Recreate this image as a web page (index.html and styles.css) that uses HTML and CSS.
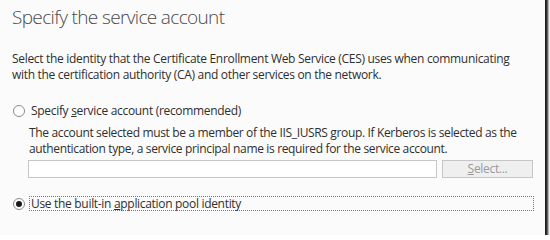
FILE: index.html
```html
<!DOCTYPE html>
<html>
<head>
<meta charset="utf-8">
<link rel="stylesheet" href="styles.css">
</head>
<body>
<div class="frame">
  <h1 class="title">Specify the service account</h1>
  <p class="intro">Select the identity that the Certificate Enrollment Web Service (CES) uses when communicating<br>with the certification authority (CA) and other services on the network.</p>
  <div class="option">
    <span class="radio"></span>
    <span class="label">Specify <u>s</u>ervice account (recommended)</span>
  </div>
  <p class="desc">The account selected must be a member of the IIS_IUSRS group. If Kerberos is selected as the<br>authentication type, a service principal name is required for the service account.</p>
  <div class="picker">
    <span class="field"></span>
    <span class="button"><u>S</u>elect...</span>
  </div>
  <div class="option option-second">
    <span class="radio radio-on"></span>
    <span class="label label-focus">Use the built-in <u>a</u>pplication pool identity</span>
  </div>
</div>
</body>
</html>
```

FILE: styles.css
```css
html, body {
  margin: 0;
  padding: 0;
  background: #ffffff;
  overflow: hidden;
}

.frame {
  box-sizing: border-box;
  width: 565px;
  height: 255px;
  margin: -20px 0 0 -20px;
  padding: 24px 0 0 32px;
  background: #fbfbfb;
  box-shadow: 3px 3px 2px #1e1e1e;
  font-family: "Open Sans", "Noto Sans", sans-serif;
  color: #2f2f2f;
  display: flex;
  flex-direction: column;
  white-space: nowrap;
}

.title {
  margin: 0;
  font-size: 19px;
  line-height: 26px;
  font-weight: 300;
  letter-spacing: -0.65px;
  color: #4a4a4a;
}

.intro,
.option,
.button {
  letter-spacing: -0.31px;
}

.desc {
  letter-spacing: -0.35px;
}

.intro {
  margin: 21px 0 0 0;
  font-size: 12px;
  line-height: 16px;
}

.option {
  display: flex;
  align-items: center;
  margin: 19px 0 0 1px;
  font-size: 12px;
  line-height: 16px;
}

.radio {
  box-sizing: border-box;
  width: 12px;
  height: 12px;
  border: 1px solid #8a8a8a;
  border-radius: 50%;
  background: #ffffff;
  margin-right: 4px;
  display: flex;
  align-items: center;
  justify-content: center;
}

.radio-on::after {
  content: "";
  width: 6px;
  height: 6px;
  border-radius: 50%;
  background: #1a1a1a;
}

.label {
  border: 1px solid transparent;
  padding: 0 1px;
}

.label u {
  text-decoration-thickness: 1px;
}

.desc {
  margin: 5px 0 0 17px;
  font-size: 12px;
  line-height: 16px;
}

.picker {
  display: flex;
  gap: 5px;
  margin: 3px 0 0 16px;
}

.field {
  box-sizing: border-box;
  width: 409px;
  height: 18px;
  border: 1px solid #c6c6c6;
  background: #ffffff;
}

.button {
  box-sizing: border-box;
  width: 91px;
  height: 18px;
  border: 1px solid #c6c6c6;
  background: #efefef;
  color: #9a9a9a;
  font-size: 12px;
  line-height: 15px;
  text-align: center;
}

.option-second {
  margin-top: 18px;
}

.label-focus {
  box-sizing: border-box;
  width: 505px;
  line-height: 13px;
  border: 1px dotted #777777;
}
```
